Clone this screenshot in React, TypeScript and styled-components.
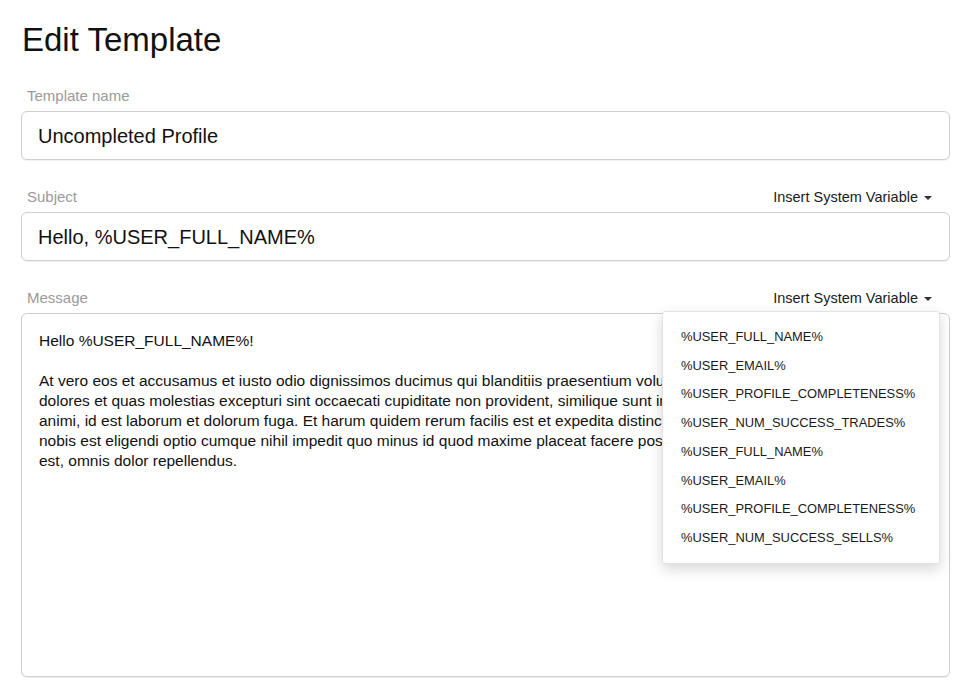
import React, { useState } from "react";
import styled, { createGlobalStyle } from "styled-components";

const GlobalStyle = createGlobalStyle`
  html, body {
    margin: 0;
    padding: 0;
    background: #fff;
  }
  body {
    font-family: "Liberation Sans", Arial, Helvetica, sans-serif;
    color: #111;
  }
`;

const Page = styled.div`
  padding: 21px 16px 0 21px;
`;

const Title = styled.h1`
  margin: 0 0 28px 1px;
  font-size: 33px;
  line-height: 37px;
  font-weight: 400;
  color: #111;
`;

const Field = styled.div`
  position: relative;
  margin-bottom: 27px;
`;

const LabelRow = styled.div`
  display: flex;
  align-items: center;
  justify-content: space-between;
  height: 20px;
  margin-bottom: 5px;
`;

const Label = styled.label`
  padding-left: 6px;
  font-size: 15px;
  line-height: 20px;
  color: #9a9a9a;
`;

const VariableToggle = styled.button`
  display: flex;
  align-items: center;
  gap: 6px;
  margin-right: 18px;
  padding: 0;
  border: none;
  background: none;
  font-family: inherit;
  font-size: 14.5px;
  line-height: 20px;
  color: #1a1a1a;
  cursor: pointer;
`;

const Caret = styled.span`
  width: 0;
  height: 0;
  border-left: 4px solid transparent;
  border-right: 4px solid transparent;
  border-top: 4px solid #333;
  margin-top: 1px;
`;

const TextInput = styled.input`
  box-sizing: border-box;
  display: block;
  width: 100%;
  height: 49px;
  padding: 1px 16px 0;
  border: 1px solid #cfcfcf;
  border-radius: 6px;
  box-shadow: 0 1px 1px rgba(0, 0, 0, 0.06);
  font-family: inherit;
  font-size: 20px;
  color: #111;
  outline: none;
`;

const MessageArea = styled.textarea`
  box-sizing: border-box;
  display: block;
  width: 100%;
  height: 364px;
  padding: 17px 17px;
  border: 1px solid #cfcfcf;
  border-radius: 6px;
  box-shadow: 0 1px 1px rgba(0, 0, 0, 0.08);
  font-family: inherit;
  font-size: 15.5px;
  line-height: 20px;
  color: #111;
  resize: none;
  outline: none;
  overflow: hidden;
`;

const Menu = styled.ul`
  position: absolute;
  top: 23px;
  right: 10px;
  width: 278px;
  box-sizing: border-box;
  margin: 0;
  padding: 11px 0 10px;
  list-style: none;
  background: #fff;
  border: 1px solid #e2e2e2;
  border-radius: 3px;
  box-shadow: 0 5px 14px rgba(0, 0, 0, 0.16);
  z-index: 10;
`;

const MenuItem = styled.li`
  padding: 0 18px;
  font-size: 12.9px;
  line-height: 28.7px;
  color: #1a1a1a;
  cursor: pointer;
  white-space: nowrap;
`;

const variables = [
  "%USER_FULL_NAME%",
  "%USER_EMAIL%",
  "%USER_PROFILE_COMPLETENESS%",
  "%USER_NUM_SUCCESS_TRADES%",
  "%USER_FULL_NAME%",
  "%USER_EMAIL%",
  "%USER_PROFILE_COMPLETENESS%",
  "%USER_NUM_SUCCESS_SELLS%",
];

const defaultMessage = [
  "Hello %USER_FULL_NAME%!",
  "",
  "At vero eos et accusamus et iusto odio dignissimos ducimus qui blanditiis praesentium voluptatum deleniti atque corrupti",
  "dolores et quas molestias excepturi sint occaecati cupiditate non provident, similique sunt in culpa qui officia",
  "animi, id est laborum et dolorum fuga. Et harum quidem rerum facilis est et expedita distinctio. Nam libero tempore,",
  "nobis est eligendi optio cumque nihil impedit quo minus id quod maxime placeat facere possimus, omnis voluptas",
  "est, omnis dolor repellendus.",
].join("\n");

const App = () => {
  const [name, setName] = useState("Uncompleted Profile");
  const [subject, setSubject] = useState("Hello, %USER_FULL_NAME%");
  const [message, setMessage] = useState(defaultMessage);
  const [menuOpen, setMenuOpen] = useState(true);

  return (
    <Page>
      <GlobalStyle />
      <Title>Edit Template</Title>

      <Field>
        <LabelRow>
          <Label>Template name</Label>
        </LabelRow>
        <TextInput value={name} onChange={(e) => setName(e.target.value)} />
      </Field>

      <Field>
        <LabelRow>
          <Label>Subject</Label>
          <VariableToggle>
            Insert System Variable
            <Caret />
          </VariableToggle>
        </LabelRow>
        <TextInput
          value={subject}
          onChange={(e) => setSubject(e.target.value)}
        />
      </Field>

      <Field>
        <LabelRow>
          <Label>Message</Label>
          <VariableToggle onClick={() => setMenuOpen(!menuOpen)}>
            Insert System Variable
            <Caret />
          </VariableToggle>
        </LabelRow>
        <MessageArea
          value={message}
          onChange={(e) => setMessage(e.target.value)}
        />
        {menuOpen && (
          <Menu>
            {variables.map((v, i) => (
              <MenuItem
                key={i}
                onClick={() => {
                  setMessage(message + v);
                  setMenuOpen(false);
                }}
              >
                {v}
              </MenuItem>
            ))}
          </Menu>
        )}
      </Field>
    </Page>
  );
};

export default App;
